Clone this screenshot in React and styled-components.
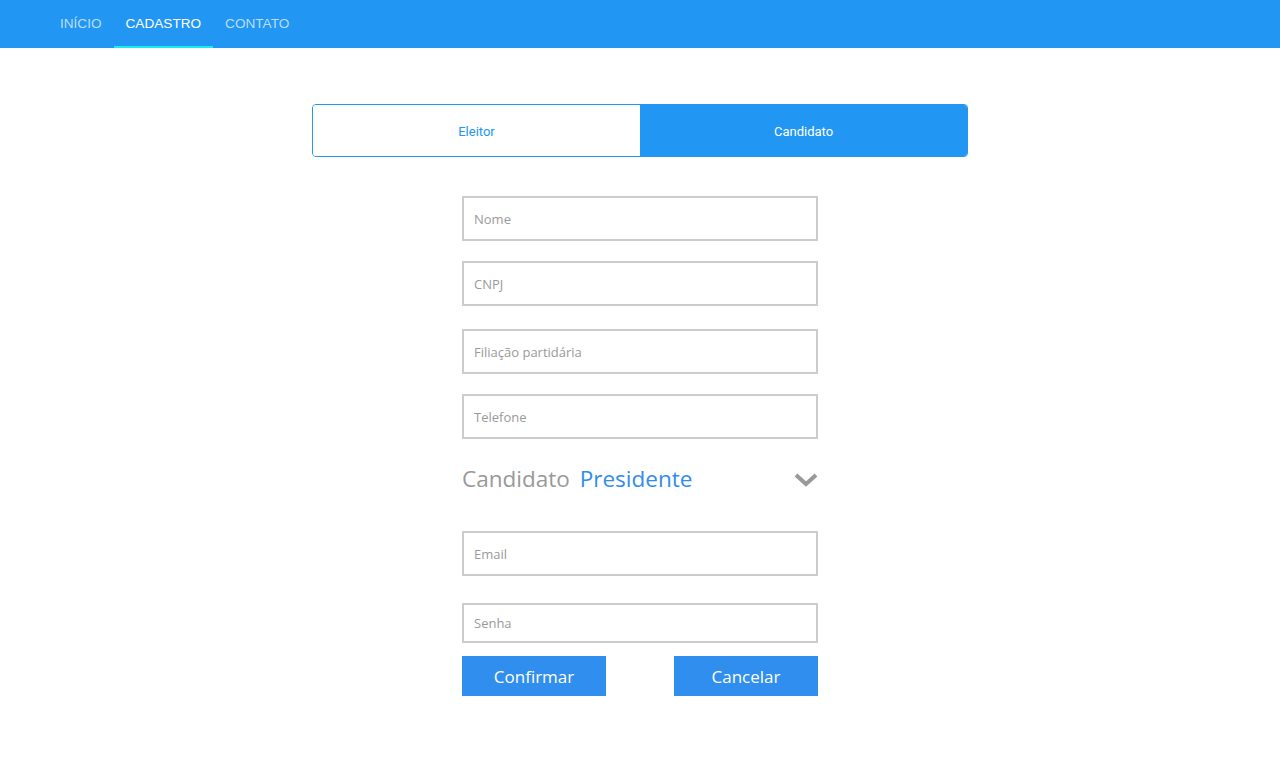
import React from 'react';
import styled, { createGlobalStyle } from 'styled-components';

const GlobalStyle = createGlobalStyle`
  html, body {
    margin: 0;
    padding: 0;
    background: #fff;
  }
  body {
    font-family: "Liberation Sans", Arial, sans-serif;
  }
`;

const TopBar = styled.nav`
  height: 48px;
  background: #2196f3;
  display: flex;
  align-items: stretch;
  padding-left: 48px;
`;

const NavItem = styled.a`
  display: flex;
  align-items: center;
  padding: 0 12px 0;
  font-size: 13.6px;
  text-transform: uppercase;
  text-decoration: none;
  color: ${props => (props.$active ? '#fff' : 'rgba(255,255,255,0.7)')};
  border-bottom: 2px solid ${props => (props.$active ? '#1de9f0' : 'transparent')};
`;

const Main = styled.main`
  display: flex;
  flex-direction: column;
  align-items: center;
  padding-top: 56px;
`;

const Tabs = styled.div`
  width: 656px;
  height: 53px;
  display: flex;
  border: 1px solid #2196f3;
  border-radius: 4px;
  overflow: hidden;
  box-sizing: border-box;
`;

const Tab = styled.button`
  flex: 1;
  border: none;
  margin: 0;
  padding-top: 2px;
  font-family: Roboto, "Liberation Sans", sans-serif;
  font-size: 13px;
  background: ${props => (props.$active ? '#2196f3' : '#fff')};
  color: ${props => (props.$active ? '#fff' : '#2196f3')};
  cursor: pointer;
`;

const Form = styled.form`
  width: 356px;
  display: flex;
  flex-direction: column;
  padding-top: 39px;
  font-family: "Open Sans", "Noto Sans", sans-serif;
`;

const Input = styled.input`
  box-sizing: border-box;
  width: 100%;
  height: ${props => props.$h || 45}px;
  margin-top: ${props => props.$mt || 0}px;
  border: 2px solid #cccccc;
  padding: 0 10px;
  font-family: "Open Sans", "Noto Sans", sans-serif;
  font-size: 13px;
  color: #555;
  outline: none;
  &::placeholder {
    color: #9a9a9a;
  }
`;

const SelectRow = styled.div`
  display: flex;
  align-items: center;
  height: 38px;
  margin-top: 20px;
  font-size: 22.5px;
`;

const SelectLabel = styled.span`
  color: #999;
  margin-right: 10px;
`;

const SelectValue = styled.span`
  color: #2f8ded;
  flex: 1;
`;

const Chevron = styled.svg`
  width: 24px;
  height: 16px;
  margin-top: 4px;
`;

const Buttons = styled.div`
  display: flex;
  justify-content: space-between;
  margin-top: 13px;
`;

const Button = styled.button`
  width: 144px;
  height: 40px;
  border: none;
  background: #308eee;
  color: #fff;
  font-family: "Open Sans", "Noto Sans", sans-serif;
  font-size: 17px;
  cursor: pointer;
`;

export default function App() {
  return (
    <>
      <GlobalStyle />
      <TopBar>
        <NavItem href="#">Início</NavItem>
        <NavItem href="#" $active>Cadastro</NavItem>
        <NavItem href="#">Contato</NavItem>
      </TopBar>
      <Main>
        <Tabs>
          <Tab type="button">Eleitor</Tab>
          <Tab type="button" $active>Candidato</Tab>
        </Tabs>
        <Form onSubmit={e => e.preventDefault()}>
          <Input placeholder="Nome" />
          <Input placeholder="CNPJ" $mt={20} />
          <Input placeholder="Filiação partidária" $mt={23} />
          <Input placeholder="Telefone" $mt={20} />
          <SelectRow>
            <SelectLabel>Candidato</SelectLabel>
            <SelectValue>Presidente</SelectValue>
            <Chevron viewBox="0 0 24 16">
              <path d="M2 3 L12 12 L22 3" fill="none" stroke="#999" strokeWidth="4" strokeLinecap="butt" />
            </Chevron>
          </SelectRow>
          <Input placeholder="Email" $mt={34} />
          <Input placeholder="Senha" $mt={27} $h={40} />
          <Buttons>
            <Button type="submit">Confirmar</Button>
            <Button type="button">Cancelar</Button>
          </Buttons>
        </Form>
      </Main>
    </>
  );
}
